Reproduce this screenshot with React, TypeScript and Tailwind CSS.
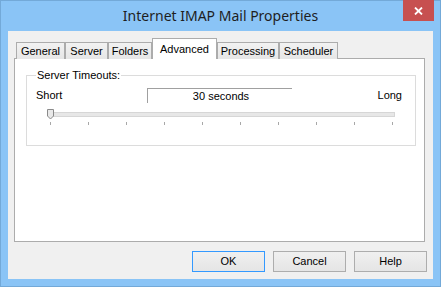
import React from 'react'

const tabs = [
  { label: 'General', w: 'w-[49px]' },
  { label: 'Server', w: 'w-[43px]' },
  { label: 'Folders', w: 'w-[44px]' },
  { label: 'Advanced', w: 'w-[65px]', active: true },
  { label: 'Processing', w: 'w-[62px]' },
  { label: 'Scheduler', w: 'w-[59px]' },
]

const ticks = Array.from({ length: 10 })

const Button = ({ label, primary }: { label: string; primary?: boolean }) => (
  <button
    className={
      'w-[73px] h-[21px] flex items-center justify-center border bg-gradient-to-b from-[#f0f0f0] to-[#e5e5e5] text-[11px] text-black ' +
      (primary ? 'border-[#3399ff]' : 'border-[#adadad]')
    }
  >
    {label}
  </button>
)

const App = () => {
  return (
    <div
      className="w-[441px] h-[287px] bg-[#8ac4f6] border border-[#73a9d8] flex flex-col"
      style={{ fontFamily: '"Liberation Sans", Arial, sans-serif' }}
    >
      {/* title bar */}
      <div className="relative h-[30px] flex items-center justify-center">
        <span
          className="text-[14px] text-[#1e1e1e] pb-[1px]"
          style={{ fontFamily: '"Noto Sans", "Open Sans", sans-serif' }}
        >
          Internet IMAP Mail Properties
        </span>
        <div className="absolute right-[6px] top-[-1px] w-[31px] h-[21px] bg-[#c75050] flex items-center justify-center">
          <svg width="9" height="8" viewBox="0 0 9 8">
            <path d="M1 0.5 L8 7.5 M8 0.5 L1 7.5" stroke="white" strokeWidth="1.8" />
          </svg>
        </div>
      </div>

      {/* client area */}
      <div className="mx-[7px] h-[248px] bg-[#f0f0f0] flex flex-col pt-[7px] px-[6px]">
        {/* tab strip */}
        <div className="flex items-end h-[21px] relative z-10 px-[2px]">
          {tabs.map((t) =>
            t.active ? (
              <div
                key={t.label}
                className={`${t.w} h-[21px] bg-white border border-b-0 border-[#acacac] flex justify-center pt-[2px] text-[11px] text-black`}
              >
                {t.label}
              </div>
            ) : (
              <div
                key={t.label}
                className={`${t.w} h-[17px] bg-gradient-to-b from-[#f2f2f2] to-[#e6e6e6] border border-b-0 border-[#acacac] flex items-center justify-center text-[11px] text-black`}
              >
                {t.label}
              </div>
            )
          )}
        </div>

        {/* tab panel */}
        <div className="-mt-[1px] w-[411px] h-[184px] bg-white border border-[#acacac] pt-[10px] px-[11px]">
          <fieldset className="w-[390px] h-[77px] border border-[#dcdcdc] px-[9px]">
            <legend className="px-[1px] text-[11px] leading-[13px] text-black">Server Timeouts:</legend>
            <div className="mt-[6px] h-[15px] flex items-center text-[11px] text-black">
              <span className="w-[111px]">Short</span>
              <div className="w-[145px] h-[15px] border-t border-l border-[#a0a0a0] flex items-center justify-center pl-[2px]">
                30 seconds
              </div>
              <span className="ml-auto mr-[4px]">Long</span>
            </div>

            <div className="relative ml-[12px] mt-[6px] w-[347px] h-[11px]">
              <div className="absolute left-0 top-[3px] w-[347px] h-[5px] bg-[#e7e7e7] border border-[#d6d6d6]" />
              <svg className="absolute left-[-1px] top-0" width="8" height="11" viewBox="0 0 8 11">
                <path d="M0.5 0.5 H6.5 V7 L3.5 10 L0.5 7 Z" fill="#e9e9e9" stroke="#8a8a8a" />
              </svg>
            </div>
            <div className="ml-[14px] mt-[2px] w-[343px] h-[3px] flex justify-between">
              {ticks.map((_, i) => (
                <div key={i} className="w-[1px] h-[3px] bg-[#a8a8a8]" />
              ))}
            </div>
          </fieldset>
        </div>

        {/* buttons */}
        <div className="mt-[9px] flex justify-end gap-[8px]">
          <Button label="OK" primary />
          <Button label="Cancel" />
          <Button label="Help" />
        </div>
      </div>
    </div>
  )
}

export default App
